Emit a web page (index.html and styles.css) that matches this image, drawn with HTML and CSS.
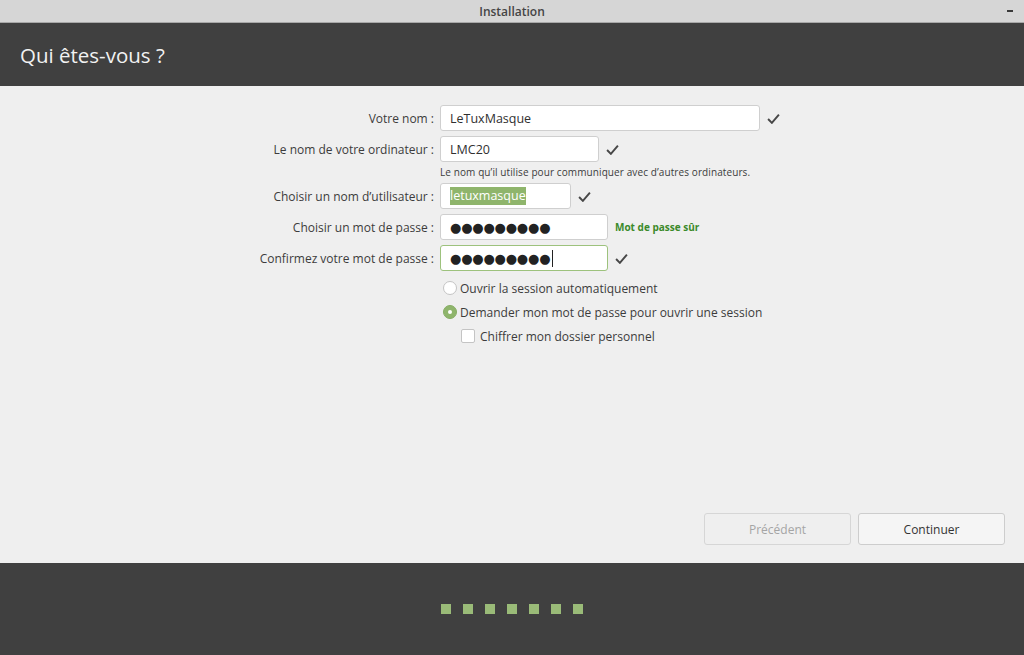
FILE: index.html
```html
<!DOCTYPE html>
<html lang="fr">
<head>
<meta charset="utf-8">
<title>Installation</title>
<link rel="stylesheet" href="styles.css">
</head>
<body>
<div class="window">
  <div class="titlebar">
    <span class="title">Installation</span>
    <span class="minimize"></span>
  </div>
  <div class="header"><h1>Qui êtes-vous ?</h1></div>
  <div class="content">
    <div class="form">
      <label class="lbl">Votre nom :</label>
      <div class="field"><div class="entry w1">LeTuxMasque</div><svg class="check" viewBox="0 0 12 10"><path d="M1 5.5 L4.5 9 L11 1.5"/></svg></div>

      <label class="lbl">Le nom de votre ordinateur :</label>
      <div class="field"><div class="entry w2">LMC20</div><svg class="check" viewBox="0 0 12 10"><path d="M1 5.5 L4.5 9 L11 1.5"/></svg></div>
      <div></div>
      <div class="hint">Le nom qu’il utilise pour communiquer avec d’autres ordinateurs.</div>

      <label class="lbl">Choisir un nom d’utilisateur :</label>
      <div class="field"><div class="entry w3"><span class="sel">letuxmasque</span></div><svg class="check" viewBox="0 0 12 10"><path d="M1 5.5 L4.5 9 L11 1.5"/></svg></div>

      <label class="lbl">Choisir un mot de passe :</label>
      <div class="field"><div class="entry w4 pw">●●●●●●●●●</div><span class="strength">Mot de passe sûr</span></div>

      <label class="lbl">Confirmez votre mot de passe :</label>
      <div class="field"><div class="entry w4 pw focus">●●●●●●●●●<span class="caret"></span></div><svg class="check" viewBox="0 0 12 10"><path d="M1 5.5 L4.5 9 L11 1.5"/></svg></div>
    </div>
    <div class="options">
      <div class="opt"><span class="radio"></span>Ouvrir la session automatiquement</div>
      <div class="opt"><span class="radio on"></span>Demander mon mot de passe pour ouvrir une session</div>
      <div class="opt sub"><span class="box"></span>Chiffrer mon dossier personnel</div>
    </div>
    <div class="buttons">
      <button class="btn disabled">Précédent</button>
      <button class="btn">Continuer</button>
    </div>
  </div>
  <div class="footer">
    <span class="dot"></span><span class="dot"></span><span class="dot"></span><span class="dot"></span><span class="dot"></span><span class="dot"></span><span class="dot"></span>
  </div>
</div>
</body>
</html>
```
FILE: styles.css
```css
* { box-sizing: border-box; }
html, body { margin: 0; padding: 0; }
body {
  font-family: "Open Sans", "Noto Sans", sans-serif;
  font-size: 12px;
  color: #3c3c3c;
  background: #efefef;
}
.window {
  width: 1024px;
  height: 655px;
  display: flex;
  flex-direction: column;
}
.titlebar {
  height: 23px;
  background: #d6d6d6;
  border-bottom: 1px solid #a8a8a8;
  display: flex;
  align-items: center;
  justify-content: center;
  padding-top: 1px;
  position: relative;
}
.title {
  font-size: 12px;
  font-weight: 600;
  color: #444;
}
.minimize {
  position: absolute;
  right: 11px;
  top: 10px;
  width: 6px;
  height: 2px;
  background: #3a3a3a;
}
.header {
  height: 63px;
  background: #404040;
  display: flex;
  align-items: center;
  padding-left: 20px;
}
.header h1 {
  margin: 0;
  font-weight: 400;
  font-size: 20.5px;
  color: #f2f2f2;
  letter-spacing: 0;
  margin-top: 0;
}
.content {
  flex: 1;
  background: #efefef;
  display: flex;
  flex-direction: column;
  padding-top: 19px;
}
.form {
  display: grid;
  grid-template-columns: 434px 1fr;
  column-gap: 6px;
  row-gap: 5px;
  align-items: center;
}
.lbl {
  text-align: right;
  color: #3c3c3c;
}
.field {
  display: flex;
  align-items: center;
  height: 26px;
}
.entry {
  height: 26px;
  background: #fff;
  border: 1px solid #cfcfcf;
  border-radius: 3px;
  padding: 0 9px;
  display: flex;
  align-items: center;
  font-size: 12.5px;
  color: #303030;
}
.w1 { width: 320px; }
.w2 { width: 159px; }
.w3 { width: 131px; }
.w4 { width: 168px; }
.entry.focus { border-color: #9dc27d; }
.pw {
  font-family: "DejaVu Sans", sans-serif;
  font-size: 13px;
  letter-spacing: -0.2px;
  color: #222;
}
.caret {
  display: inline-block;
  width: 1px;
  height: 17px;
  background: #222;
  margin-left: 2px;
}
.sel {
  background: #8fb56c;
  color: #fff;
  padding: 1px 0;
  line-height: 16px;
}
.check {
  width: 13px;
  height: 11px;
  margin-left: 7px;
  fill: none;
  stroke: #474747;
  stroke-width: 1.8;
}
.strength {
  margin-left: 7px;
  font-size: 10px;
  font-weight: 700;
  color: #3b8a2a;
}
.hint {
  font-size: 10px;
  line-height: 12px;
  color: #3c3c3c;
  margin-top: -1px;
  letter-spacing: 0.1px;
}
.options {
  margin-left: 443px;
  margin-top: 9px;
  display: flex;
  flex-direction: column;
  gap: 8px;
}
.opt {
  display: flex;
  align-items: center;
  height: 16px;
}
.opt.sub { margin-left: 18px; }
.radio {
  width: 14px;
  height: 14px;
  border-radius: 50%;
  border: 1px solid #c4c4c4;
  background: #fff;
  margin-right: 3px;
  position: relative;
}
.radio.on {
  background: #8fb56c;
  border-color: #86ad63;
}
.radio.on::after {
  content: "";
  position: absolute;
  left: 4px;
  top: 4px;
  width: 4px;
  height: 4px;
  border-radius: 50%;
  background: #fff;
}
.box {
  width: 14px;
  height: 14px;
  border: 1px solid #c4c4c4;
  border-radius: 2px;
  background: #fff;
  margin-right: 5px;
}
.buttons {
  margin-top: auto;
  margin-bottom: 18px;
  display: flex;
  justify-content: flex-end;
  gap: 7px;
  padding-right: 19px;
}
.btn {
  width: 147px;
  height: 32px;
  border: 1px solid #cdcdcd;
  border-radius: 3px;
  background: #f5f5f5;
  font-family: inherit;
  font-size: 12px;
  color: #333;
}
.btn.disabled {
  background: #efefef;
  color: #a5a5a5;
  border-color: #d6d6d6;
}
.footer {
  height: 92px;
  background: #404040;
  display: flex;
  align-items: center;
  justify-content: center;
  gap: 12px;
}
.dot {
  width: 10px;
  height: 10px;
  background: #9abb78;
}
```
